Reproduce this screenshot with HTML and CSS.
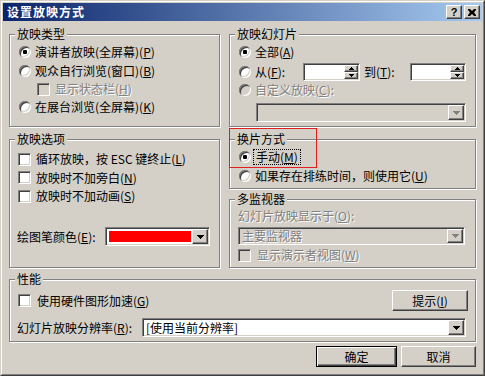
FILE: index.html
```html
<!DOCTYPE html>
<html lang="zh-CN">
<head>
<meta charset="utf-8">
<title>设置放映方式</title>
<link rel="stylesheet" href="styles.css">
</head>
<body>
<div class="window">
 <div class="frame">
  <div class="titlebar">
    <span class="title">设置放映方式</span>
    <span class="cap-btn help">?</span>
    <span class="cap-btn close"><svg width="8" height="7" viewBox="0 0 8 7"><path d="M0 0h2l2 2 2-2h2v1l-2 2.5 2 2.5v1h-2l-2-2-2 2h-2v-1l2-2.5-2-2.5z" fill="#000"/></svg></span>
  </div>
  <div class="content">
   <div class="row-top">
     <div class="group g-type">
       <span class="legend">放映类型</span>
       <div class="gbody b-type">
         <div class="opt h18"><span class="radio checked"></span><span>演讲者放映(全屏幕)(<u>P</u>)</span></div>
         <div class="opt h19"><span class="radio"></span><span>观众自行浏览(窗口)(<u>B</u>)</span></div>
         <div class="opt h18 indent"><span class="check disabled"></span><span class="dis">显示状态栏(<u>H</u>)</span></div>
         <div class="opt h18"><span class="radio"></span><span>在展台浏览(全屏幕)(<u>K</u>)</span></div>
       </div>
     </div>
     <div class="group g-slides">
       <span class="legend">放映幻灯片</span>
       <div class="gbody b-slides">
         <div class="opt h18"><span class="radio checked"></span><span>全部(<u>A</u>)</span></div>
         <div class="opt h20 r-from">
           <span class="radio"></span><span class="lbl-from">从(<u>F</u>):</span>
           <span class="spin-field sunken">
             <span class="spin">
               <span class="spin-btn raised"><svg width="5" height="3" viewBox="0 0 5 3"><path d="M2 0h1v1h1v1h1v1h-5v-1h1v-1h1z"/></svg></span>
               <span class="spin-btn raised"><svg width="5" height="3" viewBox="0 0 5 3"><path d="M0 0h5v1h-1v1h-1v1h-1v-1h-1v-1h-1z"/></svg></span>
             </span>
           </span>
           <span class="lbl-to">到(<u>T</u>):</span>
           <span class="spin-field sunken f2">
             <span class="spin">
               <span class="spin-btn raised"><svg width="5" height="3" viewBox="0 0 5 3"><path d="M2 0h1v1h1v1h1v1h-5v-1h1v-1h1z"/></svg></span>
               <span class="spin-btn raised"><svg width="5" height="3" viewBox="0 0 5 3"><path d="M0 0h5v1h-1v1h-1v1h-1v-1h-1v-1h-1z"/></svg></span>
             </span>
           </span>
         </div>
         <div class="opt h16"><span class="radio disabled"></span><span class="dis">自定义放映(<u>C</u>):</span></div>
         <div class="combo sunken c-custom disabled-bg">
           <span class="val"></span>
           <span class="arrow raised"><svg width="7" height="4" viewBox="0 0 7 4"><path class="tri-dis" d="M0 0h7v1h-1v1h-1v1h-1v1h-1v-1h-1v-1h-1v-1h-1z"/></svg></span>
         </div>
       </div>
     </div>
   </div>

   <div class="row-mid">
     <div class="group g-options">
       <span class="legend">放映选项</span>
       <div class="gbody b-options">
         <div class="opt h18 gap5"><span class="check"></span><span>循环放映，按 ESC 键终止(<u>L</u>)</span></div>
         <div class="opt h19 gap5"><span class="check"></span><span>放映时不加旁白(<u>N</u>)</span></div>
         <div class="opt h18 gap5"><span class="check"></span><span>放映时不加动画(<u>S</u>)</span></div>
         <div class="pen-row">
           <span class="lbl-pen">绘图笔颜色(<u>E</u>):</span>
           <div class="combo sunken c-pen">
             <span class="val swatch-wrap"><span class="swatch"></span></span>
             <span class="arrow raised"><svg width="7" height="4" viewBox="0 0 7 4"><path d="M0 0h7v1h-1v1h-1v1h-1v1h-1v-1h-1v-1h-1v-1h-1z"/></svg></span>
           </div>
         </div>
       </div>
     </div>
     <div class="rcol">
       <div class="group g-advance">
         <span class="legend">换片方式</span>
         <div class="gbody b-advance">
           <div class="opt h18"><span class="radio checked"></span><span class="focus">手动(<u>M</u>)</span></div>
           <div class="opt h19"><span class="radio"></span><span>如果存在排练时间，则使用它(<u>U</u>)</span></div>
         </div>
         <span class="highlight"></span>
       </div>
       <div class="group g-monitor">
         <span class="legend">多监视器</span>
         <div class="gbody b-monitor">
           <div class="opt h16"><span class="dis">幻灯片放映显示于(<u>O</u>):</span></div>
           <div class="combo sunken c-monitor disabled-bg">
             <span class="val dis">主要监视器</span>
             <span class="arrow raised"><svg width="7" height="4" viewBox="0 0 7 4"><path class="tri-dis" d="M0 0h7v1h-1v1h-1v1h-1v1h-1v-1h-1v-1h-1v-1h-1z"/></svg></span>
           </div>
           <div class="opt h18 gap6"><span class="check disabled"></span><span class="dis">显示演示者视图(<u>W</u>)</span></div>
         </div>
       </div>
     </div>
   </div>

   <div class="group g-perf">
     <span class="legend">性能</span>
     <div class="gbody b-perf">
       <div class="perf-row1">
         <span class="check"></span><span class="perf-text">使用硬件图形加速(<u>G</u>)</span>
         <span class="btn raised btn-tip">提示(<u>I</u>)</span>
       </div>
       <div class="perf-row2">
         <span class="lbl-res">幻灯片放映分辨率(<u>R</u>):</span>
         <div class="combo sunken c-res">
           <span class="val">[使用当前分辨率]</span>
           <span class="arrow raised"><svg width="7" height="4" viewBox="0 0 7 4"><path d="M0 0h7v1h-1v1h-1v1h-1v1h-1v-1h-1v-1h-1v-1h-1z"/></svg></span>
         </div>
       </div>
     </div>
   </div>

   <div class="buttons">
     <span class="btn default btn-ok">确定</span>
     <span class="btn raised btn-cancel">取消</span>
   </div>
  </div>
 </div>
</div>
</body>
</html>
```

FILE: styles.css
```css
* { box-sizing: border-box; }
html, body { margin: 0; padding: 0; }
body {
  width: 485px; height: 376px; overflow: hidden;
  background: #d4d0c8;
  font-family: "Noto Sans CJK SC", "Noto Sans CJK JP", sans-serif;
  font-size: 12px; line-height: 12px; color: #000;
}
u { text-underline-offset: 1px; }

.window {
  width: 485px; height: 376px;
  border: 1px solid; border-color: #d4d0c8 #404040 #404040 #d4d0c8;
  background: #d4d0c8;
}
.frame {
  height: 100%;
  border: 1px solid; border-color: #fff #808080 #808080 #fff;
  padding: 1px;
  display: flex; flex-direction: column;
}

.titlebar {
  height: 18px; flex: none;
  background: linear-gradient(to right, #0a246a, #a6caf0);
  display: flex; align-items: center;
  padding: 0 2px 0 2px;
}
.title {
  color: #fff; font-weight: bold; letter-spacing: 1px;
  margin-left: 2px; flex: 1;
}
.cap-btn {
  width: 16px; height: 14px;
  background: #d4d0c8;
  border: 1px solid; border-color: #fff #404040 #404040 #fff;
  box-shadow: inset -1px -1px #808080, inset 1px 1px #d4d0c8;
  display: flex; align-items: center; justify-content: center;
}
.help {
  font-family: "Liberation Sans", sans-serif; font-weight: bold; font-size: 11px;
  margin-right: 2px; padding-bottom: 1px;
}

.content {
  flex: 1;
  padding: 13px 0 0 6px;
  display: flex; flex-direction: column;
}

.raised {
  background: #d4d0c8;
  border: 1px solid; border-color: #fff #404040 #404040 #fff;
  box-shadow: inset -1px -1px #808080, inset 1px 1px #d4d0c8;
}
.sunken {
  border: 1px solid; border-color: #808080 #fff #fff #808080;
  box-shadow: inset 1px 1px #404040, inset -1px -1px #d4d0c8;
  padding: 1px;
  background: #fff;
}

.group {
  border: 1px solid #808080;
  box-shadow: inset 1px 1px #fff, 1px 1px #fff;
  display: flex; flex-direction: column; align-items: flex-start;
  position: relative;
}
.legend {
  margin: -7px 0 0 5px;
  padding: 0 2px;
  height: 12px;
  background: #d4d0c8;
  white-space: nowrap;
}
.gbody { display: flex; flex-direction: column; align-self: stretch; }

.row-top { display: flex; gap: 9px; height: 93px; }
.row-mid { display: flex; gap: 9px; height: 129px; margin-top: 12px; }
.g-type, .g-options { width: 211px; }
.g-slides { width: 247px; }
.rcol { width: 247px; display: flex; flex-direction: column; gap: 10px; }
.g-advance { height: 50px; }
.g-monitor { flex: 1; }
.g-perf { width: 467px; height: 63px; margin-top: 11px; }

.opt { display: flex; align-items: center; gap: 4px; white-space: nowrap; }
.h16 { height: 16px; }
.h18 { height: 18px; }
.h19 { height: 19px; }
.h20 { height: 20px; }
.gap5 { gap: 5px; }
.gap6 { gap: 6px; }
.indent { margin-left: 18px; gap: 5px; }

.radio {
  width: 12px; height: 12px; flex: none; border-radius: 50%;
  background: #fff; position: relative;
  box-shadow: inset 1px 1px 0 #808080, inset -1px -1px 0 #fff,
              inset 2px 2px 0 #404040, inset -2px -2px 0 #d4d0c8;
}
.radio.checked::after {
  content: ""; position: absolute; left: 4px; top: 4px;
  width: 4px; height: 4px; border-radius: 1px; background: #000;
}
.radio.disabled { background: #d4d0c8; }

.check {
  width: 13px; height: 13px; flex: none;
  border: 1px solid; border-color: #808080 #fff #fff #808080;
  box-shadow: inset 1px 1px #404040, inset -1px -1px #d4d0c8;
  background: #fff;
}
.check.disabled { background: #d4d0c8; }

.dis { color: #808080; text-shadow: 1px 1px 0 #fff; }
.tri-dis { fill: #808080; }

/* 放映类型 */
.b-type { margin-top: 3px; padding-left: 9px; }

/* 放映幻灯片 */
.b-slides { margin-top: 3px; padding-left: 9px; }
.r-from { margin-top: 1px; gap: 0; }
.r-from .radio { margin-right: 4px; }
.lbl-from { width: 48px; }
.lbl-to { width: 46px; margin-left: 4px; }
.spin-field {
  width: 57px; height: 18px;
  display: flex; justify-content: flex-end;
}
.spin-field.f2 { width: 56px; }
.spin { width: 14px; display: flex; flex-direction: column; }
.spin-btn {
  flex: 1; display: flex; align-items: center; justify-content: center;
}
.spin-btn svg { display: block; }
.c-custom { width: 210px; height: 19px; margin: 5px 0 0 17px; }

.combo { display: flex; align-items: stretch; }
.combo .val { flex: 1; display: flex; align-items: center; padding-left: 2px; white-space: nowrap; }
.combo .arrow {
  width: 16px; flex: none;
  display: flex; align-items: center; justify-content: center;
}
.combo .arrow svg { display: block; }
.disabled-bg { background: #d4d0c8; }

/* 放映选项 */
.b-options { margin-top: 5px; padding-left: 8px; }
.pen-row { display: flex; align-items: center; margin: 22px 0 0 -1px; height: 19px; }
.lbl-pen { width: 88px; white-space: nowrap; }
.c-pen { width: 105px; height: 19px; }
.swatch-wrap { padding: 2px; }
.swatch { display: block; width: 82px; height: 11px; background: #ff0000; }
.c-pen .val { padding: 0 0 0 2px; }

/* 换片方式 */
.b-advance { margin-top: 3px; padding-left: 9px; }
.focus { outline: 1px dotted #000; outline-offset: 1px; padding: 0 1px; }
.highlight {
  position: absolute; left: -1px; top: -12px;
  width: 88px; height: 40px;
  border: 1px solid #e02020;
}

/* 多监视器 */
.b-monitor { margin-top: 3px; padding-left: 8px; }
.c-monitor { width: 227px; height: 18px; margin-top: 3px; }
.b-monitor .h18 { margin-top: 1px; }

/* 性能 */
.b-perf { margin-top: 5px; padding: 0 7px 0 8px; }
.perf-row1 { display: flex; align-items: center; height: 21px; }
.perf-text { margin-left: 6px; white-space: nowrap; }
.btn {
  display: flex; align-items: center; justify-content: center;
  height: 21px; white-space: nowrap;
}
.btn-tip { width: 76px; margin-left: auto; }
.perf-row2 { display: flex; align-items: center; height: 19px; margin: 7px 0 0 -1px; }
.lbl-res { width: 125px; white-space: nowrap; }
.c-res { width: 324px; height: 19px; }
.c-res .val { padding-left: 2px; }

/* bottom buttons */
.buttons {
  display: flex; justify-content: flex-end; gap: 4px;
  margin-top: 4px; padding-right: 6px;
}
.btn-ok, .btn-cancel { width: 75px; }
.btn.default {
  width: 81px;
  background: #d4d0c8;
  border: 1px solid #000;
  box-shadow: inset 1px 1px #fff, inset -1px -1px #404040, inset -2px -2px #808080;
}
```
